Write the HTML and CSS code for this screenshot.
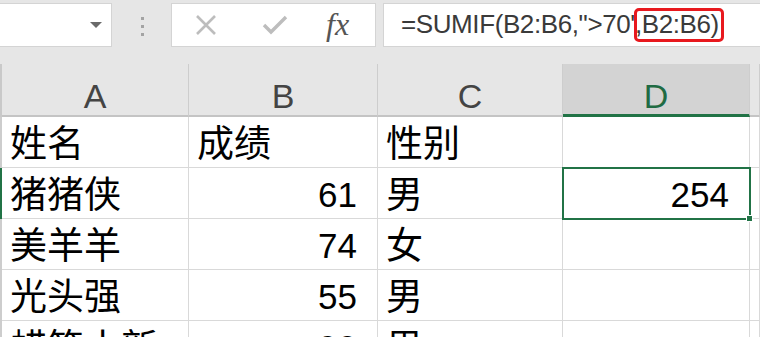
FILE: index.html
```html
<!DOCTYPE html>
<html lang="zh-CN">
<head>
    <meta charset="UTF-8">
    <title>SUMIF</title>
    <link rel="stylesheet" href="styles.css">
</head>
<body>

<div class="bar">
    <div class="name-box"><span class="caret"></span></div>
    <div class="grip"><i></i><i></i><i></i></div>
    <div class="fx-box">
        <svg class="icon" width="24" height="20" viewBox="0 0 24 20">
            <path d="M3 1 L21 19 M21 1 L3 19" stroke="#bdbdbd" stroke-width="2.6" fill="none"/>
        </svg>
        <svg class="icon" width="26" height="20" viewBox="0 0 26 20">
            <path d="M2 10 L9 17 L24 2" stroke="#bdbdbd" stroke-width="3.4" fill="none"/>
        </svg>
        <span class="fx">fx</span>
    </div>
    <div class="formula">=SUMIF(B2:B6,"&gt;70'<span class="mark">,B2:B6)</span></div>
</div>

<div class="grid">
    <div class="hd side"></div>
    <div class="hd">A</div>
    <div class="hd">B</div>
    <div class="hd">C</div>
    <div class="hd on">D</div>
    <div class="hd"></div>

    <div class="side"></div>
    <div class="cell">姓名</div>
    <div class="cell">成绩</div>
    <div class="cell">性别</div>
    <div class="cell"></div>
    <div class="cell"></div>

    <div class="side on"></div>
    <div class="cell">猪猪侠</div>
    <div class="cell num">61</div>
    <div class="cell">男</div>
    <div class="cell num sel">254<span class="handle"></span></div>
    <div class="cell"></div>

    <div class="side"></div>
    <div class="cell">美羊羊</div>
    <div class="cell num">74</div>
    <div class="cell">女</div>
    <div class="cell"></div>
    <div class="cell"></div>

    <div class="side"></div>
    <div class="cell">光头强</div>
    <div class="cell num">55</div>
    <div class="cell">男</div>
    <div class="cell"></div>
    <div class="cell"></div>

    <div class="side"></div>
    <div class="cell">蜡笔小新</div>
    <div class="cell num">90</div>
    <div class="cell">男</div>
    <div class="cell"></div>
    <div class="cell"></div>
</div>

</body>
</html>
```

FILE: styles.css
```css
*{
    padding: 0;
    margin: 0;
    box-sizing: border-box;
}
body{
    background: #fff;
    width: 760px;
    height: 337px;
    overflow: hidden;
    font-family: "Liberation Sans", "Noto Sans CJK SC", sans-serif;
}

/* formula bar */
.bar{
    display: flex;
    height: 64px;
    padding-top: 3px;
    background: #e6e6e6;
}
.name-box{
    width: 113px;
    height: 44px;
    margin-left: -1px;
    background: #fff;
    border: 1px solid #d4d4d4;
    display: flex;
    justify-content: flex-end;
    align-items: center;
    padding-right: 9px;
}
.caret{
    width: 0;
    height: 0;
    border-left: 6px solid transparent;
    border-right: 6px solid transparent;
    border-top: 6px solid #6a6a6a;
}
.grip{
    width: 59px;
    height: 44px;
    display: flex;
    flex-direction: column;
    align-items: center;
    gap: 5px;
    padding-top: 14px;
    padding-left: 1px;
}
.grip i{
    width: 3px;
    height: 3px;
    background: #a3a3a3;
}
.fx-box{
    width: 205px;
    height: 44px;
    background: #fff;
    border: 1px solid #d4d4d4;
    display: flex;
    align-items: center;
    padding-left: 22px;
}
.icon{
    margin-right: 44px;
}
.icon + .icon{
    margin-right: 38px;
}
.fx{
    font-family: "Liberation Serif", serif;
    font-style: italic;
    font-size: 32px;
    color: #555;
    margin-top: -2px;
}
.formula{
    flex: 1;
    height: 44px;
    margin-left: 7px;
    margin-right: -1px;
    background: #fff;
    border: 1px solid #d4d4d4;
    padding-left: 17px;
    font-size: 26px;
    line-height: 40px;
    letter-spacing: -0.4px;
    color: #3a3a3a;
    white-space: nowrap;
}
.mark{
    position: relative;
}
.mark::after{
    content: "";
    position: absolute;
    left: -1px;
    right: -5px;
    top: -1px;
    bottom: -3px;
    border: 3px solid #e8191e;
    border-radius: 5px;
}

/* sheet */
.grid{
    display: grid;
    grid-template-columns: 2px 187px 189px 185px 187px 1fr;
    grid-auto-rows: 51px;
    grid-template-rows: 53px;
}
.hd{
    background: #e6e6e6;
    border-right: 1px solid #cdcdcd;
    border-bottom: 2px solid #c4c4c4;
    font-size: 34px;
    color: #444;
    text-align: center;
    line-height: 64px;
}
.hd.side{
    background: #c9c9c9;
    border: 0;
}
.hd.on{
    background: #d3d3d3;
    color: #1f6b43;
    border-bottom: 3px solid #217346;
}
.side{
    background: #cdcdcd;
}
.side.on{
    background: #217346;
}
.cell{
    border-right: 1px solid #d9d9d9;
    border-bottom: 1px solid #d9d9d9;
    font-size: 37px;
    line-height: 56px;
    padding-left: 8px;
    color: #000;
    white-space: nowrap;
    overflow: hidden;
}
.num{
    text-align: right;
    padding-right: 20px;
    font-size: 35px;
    line-height: 54px;
}
.sel{
    position: relative;
    overflow: visible;
    outline: 2px solid #217346;
    outline-offset: -1px;
}
.handle{
    position: absolute;
    right: -4px;
    bottom: -4px;
    width: 7px;
    height: 7px;
    background: #217346;
    border: 1px solid #fff;
}
```
